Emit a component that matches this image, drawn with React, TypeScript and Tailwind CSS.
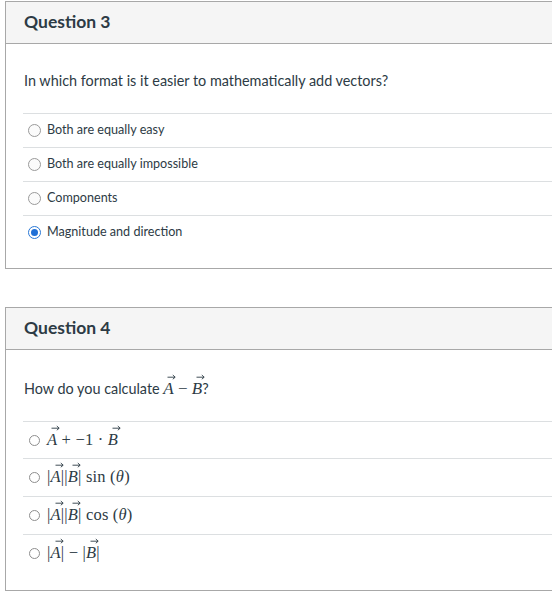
import React from "react";

const font = { fontFamily: "Lato, 'Open Sans', sans-serif" };

function Radio({ checked = false, small = false }: { checked?: boolean; small?: boolean }) {
  if (checked) {
    return (
      <span className="flex h-[13px] w-[13px] items-center justify-center rounded-full border border-[#2a78d6] bg-white">
        <span className="h-[7px] w-[7px] rounded-full bg-[#1f6fd6]" />
      </span>
    );
  }
  return (
    <span
      className={
        small
          ? "h-[11px] w-[11px] rounded-full border border-[#8e8e8e] bg-white"
          : "h-[13px] w-[13px] rounded-full border border-[#9a9a9a] bg-[#fbfbfb]"
      }
    />
  );
}

// vector letter with arrow above
function Vec({ l }: { l: string }) {
  return (
    <span className="relative inline-block italic">
      {l}
      <svg
        className="absolute left-[4px] top-[-3px]"
        width="9"
        height="6"
        viewBox="0 0 9 6"
        fill="none"
        stroke="#2d3b45"
        strokeWidth="0.9"
      >
        <path d="M0.5 3.2 H8 M5.8 1 L8.2 3.2 L5.8 5.2" />
      </svg>
    </span>
  );
}

const mathFont = { fontFamily: "'Liberation Serif', 'DejaVu Serif', serif" };

function Card({
  title,
  question,
  children,
  top,
}: {
  title: string;
  question: React.ReactNode;
  children: React.ReactNode;
  top: string;
}) {
  return (
    <div className={`ml-[5px] w-[560px] border border-[#a8a8a8] bg-white ${top}`}>
      <div className="flex h-[42px] items-center border-b border-[#a8a8a8] bg-[#f5f5f5] pl-[18px]">
        <h2 className="text-[17.5px] font-bold text-[#2d3b45]">{title}</h2>
      </div>
      <div className="pl-[17px]">{question}</div>
      {children}
    </div>
  );
}

function Option({ label, checked }: { label: string; checked?: boolean }) {
  return (
    <div className="flex h-[34px] items-center gap-[6px] border-t border-[#dcdfe1] pl-[5px] text-[12.6px] text-[#2d3b45]">
      <Radio checked={checked} />
      <span>{label}</span>
    </div>
  );
}

function MathOption({ children, h }: { children: React.ReactNode; h: string }) {
  return (
    <div className={`flex items-center gap-[7px] border-t border-[#dcdfe1] pl-[6px] text-[#2d3b45] ${h}`}>
      <Radio small />
      <span className="text-[16.5px] tracking-[0.2px]" style={mathFont}>
        {children}
      </span>
    </div>
  );
}

export default function App() {
  return (
    <div className="w-[552px] h-[597px] overflow-hidden bg-white" style={font}>
      <Card
        top="mt-px"
        title="Question 3"
        question={
          <p className="pl-[1px] pt-[26px] pb-[21px] text-[14.4px] leading-[22px] text-[#2d3b45]">
            In which format is it easier to mathematically add vectors?
          </p>
        }
      >
        <div className="ml-[17px] pb-[19px]">
          <Option label="Both are equally easy" />
          <Option label="Both are equally impossible" />
          <Option label="Components" />
          <Option label="Magnitude and direction" checked />
        </div>
      </Card>

      <Card
        top="mt-[38px]"
        title="Question 4"
        question={
          <p className="pl-[1px] pt-[27px] pb-[20px] text-[14.4px] leading-[24px] text-[#2d3b45]">
            How do you calculate{" "}
            <span className="text-[17px]" style={mathFont}>
              <Vec l="A" /> − <Vec l="B" />
            </span>
            ?
          </p>
        }
      >
        <div className="ml-[17px] pb-[18px]">
          <MathOption h="h-[37px]">
            <Vec l="A" /> + −1 · <Vec l="B" />
          </MathOption>
          <MathOption h="h-[38px]">
            |<Vec l="A" />||<Vec l="B" />| sin (<i>θ</i>)
          </MathOption>
          <MathOption h="h-[38px]">
            |<Vec l="A" />||<Vec l="B" />| cos (<i>θ</i>)
          </MathOption>
          <MathOption h="h-[38px]">
            |<Vec l="A" />| − |<Vec l="B" />|
          </MathOption>
        </div>
      </Card>
    </div>
  );
}
